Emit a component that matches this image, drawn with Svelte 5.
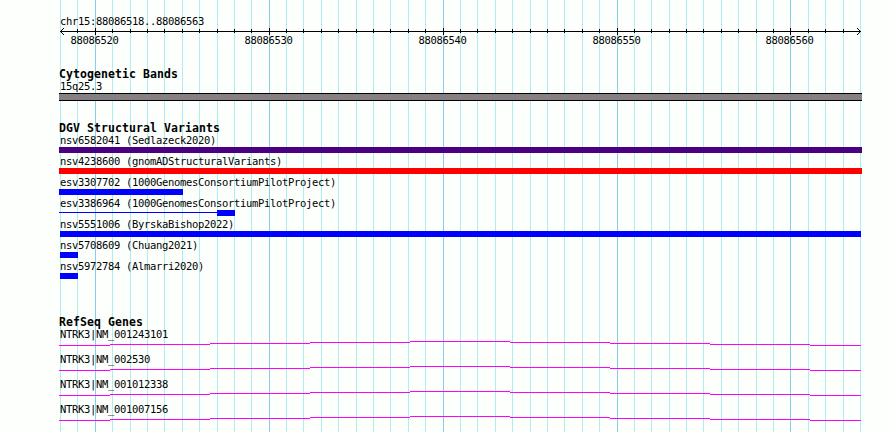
<script lang="ts">
	interface Variant {
		name: string;
		source: string;
		color: string;
		start: number;
		end: number;
		tail?: number;
	}

	const SEGMENT_START = 88086518;
	const LEFT = 60;
	const WIDTH = 800;
	const STEPS = 46;

	const lines = Array.from({ length: STEPS + 1 }, (_, i) => ({
		x: LEFT + Math.round((i * WIDTH) / STEPS),
		pos: SEGMENT_START + i,
		major: (SEGMENT_START + i) % 10 === 0
	}));
	const ticks = lines.slice(1, -1);
	const majors = lines.filter((l) => l.major);

	// pixel extents on the panel
	const variants: Variant[] = [
		{ name: 'nsv6582041', source: 'Sedlazeck2020', color: '#4b0082', start: 59, end: 862 },
		{ name: 'nsv4238600', source: 'gnomADStructuralVariants', color: '#ff0000', start: 59, end: 862 },
		{ name: 'esv3307702', source: '1000GenomesConsortiumPilotProject', color: '#0000ff', start: 59, end: 183 },
		{ name: 'esv3386964', source: '1000GenomesConsortiumPilotProject', color: '#0000ff', start: 217, end: 235, tail: 59 },
		{ name: 'nsv5551006', source: 'ByrskaBishop2022', color: '#0000ff', start: 60, end: 861 },
		{ name: 'nsv5708609', source: 'Chuang2021', color: '#0000ff', start: 60, end: 78 },
		{ name: 'nsv5972784', source: 'Almarri2020', color: '#0000ff', start: 60, end: 78 }
	];

	const genes = ['NM_001243101', 'NM_002530', 'NM_001012338', 'NM_001007156'];

	// intron hat, one pixel per step
	const edges = [59, 110, 210, 310, 410, 510, 610, 710, 810, 861];
	const intron = edges.slice(0, -1).map((x, i) => ({ x, w: edges[i + 1] - x, y: Math.abs(4 - i) }));
</script>

<div class="panel">
	<svg class="grid" width="890" height="432" shape-rendering="crispEdges">
		{#each lines as l}
			<rect x={l.x} y="0" width="1" height="432" fill={l.major ? '#87ceeb' : '#afeeee'} />
		{/each}
	</svg>

	<header class="scale">
		<div class="label">chr15:88086518..88086563</div>
		<svg class="ruler" width="890" height="8" shape-rendering="crispEdges">
			<rect x="60" y="4" width="801" height="1" />
			{#each ticks as t}
				<rect x={t.x} y={t.major ? 1 : 2} width="1" height={t.major ? 7 : 4} />
			{/each}
			<path d="M61 3h1v1h-1zM62 2h1v1h-1zM63 1h1v1h-1zM61 5h1v1h-1zM62 6h1v1h-1zM63 7h1v1h-1z" />
			<path d="M859 3h1v1h-1zM858 2h1v1h-1zM857 1h1v1h-1zM859 5h1v1h-1zM858 6h1v1h-1zM857 7h1v1h-1z" />
		</svg>
		<svg class="numbers" width="890" height="12">
			{#each majors as m}
				<text x={m.x - 24.6} y="9">{m.pos}</text>
			{/each}
		</svg>
	</header>

	<section class="bands">
		<h2>Cytogenetic Bands</h2>
		<div class="label">15q25.3</div>
		<div class="band"></div>
	</section>

	<section class="variants">
		<h2>DGV Structural Variants</h2>
		{#each variants as v}
			<div class="variant">
				<div class="label">{v.name} ({v.source})</div>
				<svg class="bar" width="890" height="6" shape-rendering="crispEdges" fill={v.color}>
					{#if v.tail}
						<rect x={v.tail} y="2" width={v.start - v.tail} height="1" />
					{/if}
					<rect x={v.start} y="0" width={v.end - v.start} height="6" />
				</svg>
			</div>
		{/each}
	</section>

	<section class="genes">
		<h2>RefSeq Genes</h2>
		{#each genes as g}
			<div class="gene">
				<div class="label">NTRK3|{g}</div>
				<svg class="intron" width="890" height="5" shape-rendering="crispEdges">
					{#each intron as s}
						<rect x={s.x} y={s.y} width={s.w} height="1" />
					{/each}
				</svg>
			</div>
		{/each}
	</section>
</div>

<style>
	:global(body) {
		margin: 0;
		background: #fdfffc;
	}
	.panel {
		position: relative;
		box-sizing: border-box;
		width: 890px;
		height: 432px;
		padding-top: 15px;
		overflow: hidden;
		background: #fdfffc;
		color: #000;
		font-family: 'DejaVu Sans Mono', monospace;
		font-size: 10.5px;
		letter-spacing: -0.32px;
	}
	.grid {
		position: absolute;
		top: 0;
		left: 0;
	}
	svg {
		display: block;
	}
	header,
	section {
		position: relative;
	}
	.label {
		height: 12px;
		padding-left: 60px;
		line-height: 12px;
		white-space: pre;
	}
	h2 {
		height: 12px;
		margin: 0;
		padding-left: 59px;
		font-size: 11.5px;
		font-weight: bold;
		line-height: 12px;
		letter-spacing: 0.077px;
		white-space: pre;
	}
	.bands {
		margin-top: 21px;
	}
	.band {
		box-sizing: border-box;
		width: 803px;
		height: 8px;
		margin: 1px 0 0 59px;
		border: solid #000;
		border-width: 1px 0;
		background: #848084;
	}
	.variants {
		margin-top: 21px;
	}
	.variant {
		height: 21px;
	}
	.bar {
		margin-top: 1px;
	}
	.genes {
		margin-top: 35px;
	}
	.gene {
		height: 25px;
	}
	.intron {
		margin-top: 1px;
		fill: #ff00ff;
	}
</style>
